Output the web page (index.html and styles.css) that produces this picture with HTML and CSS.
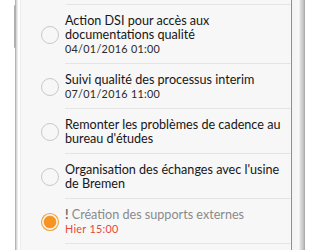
FILE: index.html
```html
<!DOCTYPE html>
<html lang="fr">
<head>
<meta charset="utf-8">
<title>Tâches</title>
<link rel="stylesheet" href="styles.css">
</head>
<body>
<div class="page">
  <div class="phone">
    <div class="side-button"></div>
    <div class="screen">
      <div class="top-gap"></div>
      <div class="row">
        <div class="radio"><svg width="20" height="20" viewBox="0 0 20 20"><circle cx="10" cy="10" r="8.5" fill="none" stroke="#c9c9cc" stroke-width="1"/></svg></div>
        <div class="content">
          <div class="title">Action DSI pour accès aux documentations qualité</div>
          <div class="date">04/01/2016 01:00</div>
        </div>
      </div>
      <div class="row">
        <div class="radio"><svg width="20" height="20" viewBox="0 0 20 20"><circle cx="10" cy="10" r="8.5" fill="none" stroke="#c9c9cc" stroke-width="1"/></svg></div>
        <div class="content">
          <div class="title">Suivi qualité des processus interim</div>
          <div class="date">07/01/2016 11:00</div>
        </div>
      </div>
      <div class="row">
        <div class="radio"><svg width="20" height="20" viewBox="0 0 20 20"><circle cx="10" cy="10" r="8.5" fill="none" stroke="#c9c9cc" stroke-width="1"/></svg></div>
        <div class="content">
          <div class="title">Remonter les problèmes de cadence au bureau d'études</div>
        </div>
      </div>
      <div class="row">
        <div class="radio"><svg width="20" height="20" viewBox="0 0 20 20"><circle cx="10" cy="10" r="8.5" fill="none" stroke="#c9c9cc" stroke-width="1"/></svg></div>
        <div class="content">
          <div class="title">Organisation des échanges avec l'usine de Bremen</div>
        </div>
      </div>
      <div class="row">
        <div class="radio"><svg width="20" height="20" viewBox="0 0 20 20"><circle cx="10" cy="10" r="8.5" fill="none" stroke="#f2a233" stroke-width="1.1"/><circle cx="10" cy="10" r="6" fill="#f7931e" stroke="#e9851a" stroke-width="0.6"/></svg></div>
        <div class="content">
          <div class="title muted"><span class="bang">!</span> Création des supports externes</div>
          <div class="date late">Hier 15:00</div>
        </div>
      </div>
    </div>
    <div class="bezel-right"></div>
  </div>
</div>
</body>
</html>
```
FILE: styles.css
```css
html, body {
  margin: 0;
  padding: 0;
  background: #ffffff;
}
body {
  font-family: Lato, "Liberation Sans", Arial, sans-serif;
  width: 324px;
  height: 250px;
  overflow: hidden;
}
.page {
  display: flex;
  height: 250px;
}
.phone {
  position: relative;
  margin-left: 15px;
  display: flex;
  height: 250px;
  border-left: 1px solid #b5b5b5;
  box-shadow: inset 1px 0 0 #d8d8d8, inset 2px 0 0 #ececec;
  padding-left: 4px;
  background: #ffffff;
}
.side-button {
  position: absolute;
  left: -2px;
  top: 5px;
  width: 2px;
  height: 43px;
  background: #b0b0b0;
  border-radius: 1px 0 0 1px;
}
.screen {
  width: 272px;
  height: 250px;
  background: #f7f7f7;
  border-right: 1px solid #8f8f8f;
  border-left: 1px solid #ececec;
  box-sizing: border-box;
  overflow: hidden;
}
.top-gap {
  height: 4px;
  margin-left: 45px;
  border-bottom: 1px solid #e4e4e4;
}
.row {
  display: flex;
  align-items: center;
}
.radio {
  width: 20px;
  height: 20px;
  margin-left: 19px;
  margin-right: 5px;
  flex: none;
}
.radio svg {
  display: block;
}
.content {
  flex: 1;
  padding: 9px 4px 7px 0;
  border-bottom: 1px solid #e4e4e4;
}
.title {
  font-size: 12.6px;
  line-height: 14px;
  color: #161616;
}
.title.muted {
  color: #8a8a8a;
}
.bang {
  color: #6a6a6a;
  font-weight: 700;
}
.date {
  font-size: 10.8px;
  line-height: 14px;
  letter-spacing: 0.3px;
  color: #2a2a2a;
}
.date.late {
  color: #e8473c;
}
.bezel-right {
  width: 13px;
  height: 250px;
  background: linear-gradient(to right, #f3f3f3 0, #f8f8f8 7px, #e2e2e2 8px, #cfcfcf 10px, #b9b9b9 12px, #a0a0a0 13px);
}
```
